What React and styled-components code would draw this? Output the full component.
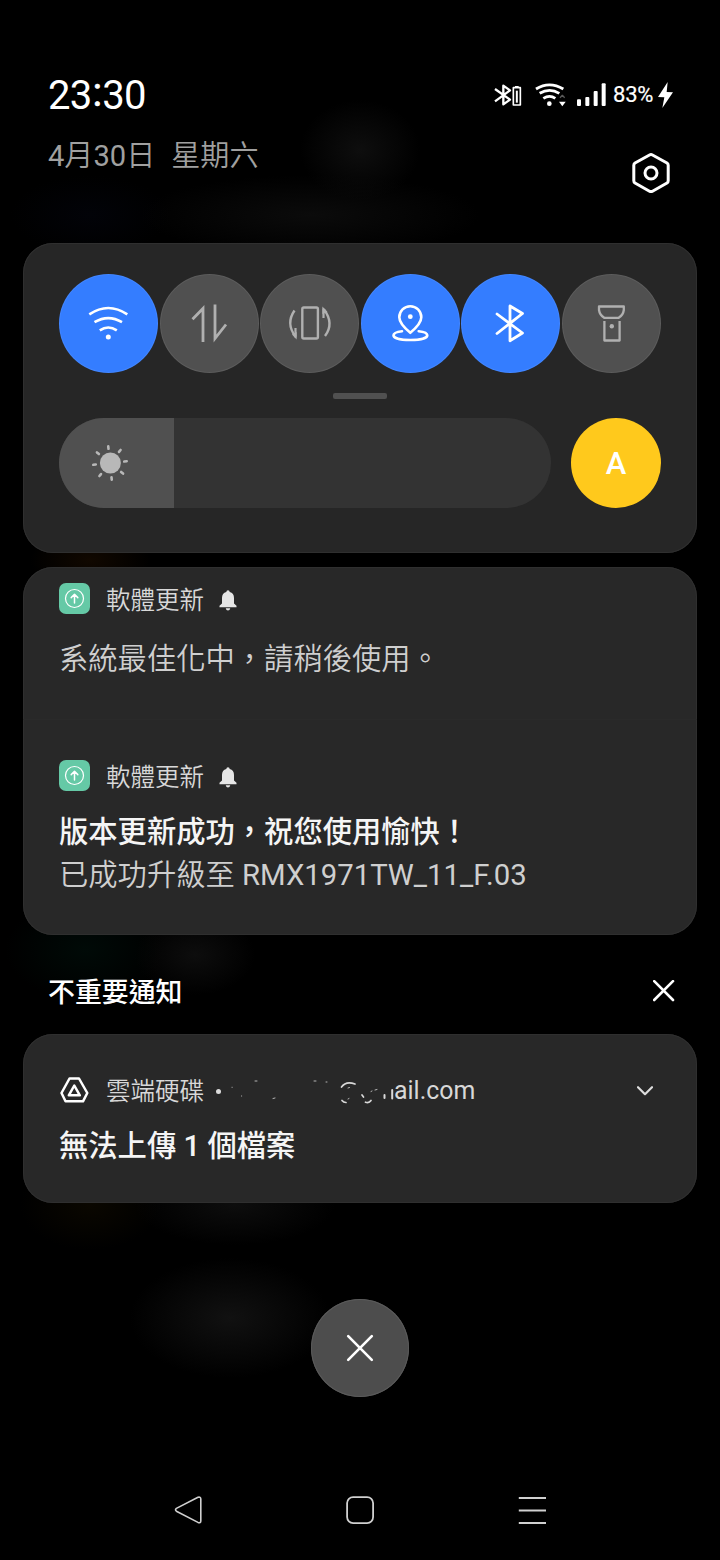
import styled, { createGlobalStyle } from 'styled-components';

const App = () => {
	return (
		<Screen lang="zh-Hant">
			<GlobalStyle />
			<Header>
				<DateTime>
					<Time>23<Colon>:</Colon>30</Time>
					<Today>
						<span>4月30日</span>
						<span>星期六</span>
					</Today>
				</DateTime>
				<StatusSide>
					<StatusBar>
						<BluetoothBatteryIcon />
						<StatusWifiIcon />
						<SignalIcon />
						<Percent>83%</Percent>
						<BoltIcon />
					</StatusBar>
					<SettingsIcon />
				</StatusSide>
			</Header>

			<QuickPanel>
				<Tiles>
					{tiles.map(({ name, on, Icon }) => (
						<Tile key={name} $on={on} aria-label={name}>
							<Icon />
						</Tile>
					))}
				</Tiles>
				<Handle />
				<BrightnessRow>
					<Slider>
						<SliderFill>
							<SunIcon />
						</SliderFill>
					</Slider>
					<AutoButton>A</AutoButton>
				</BrightnessRow>
			</QuickPanel>

			<Notifications>
				<Notice $height="152px" $top="14px">
					<NoticeHead>
						<UpdateIcon />
						<AppName $drop="5px">軟體更新</AppName>
						<BellIcon />
					</NoticeHead>
					<Text $top="23px">系統最佳化中，請稍後使用。</Text>
				</Notice>
				<Notice $height="216px" $top="38px" $line>
					<NoticeHead>
						<UpdateIcon />
						<AppName $drop="5px">軟體更新</AppName>
						<BellIcon />
					</NoticeHead>
					<Title $top="19px">版本更新成功，祝您使用愉快！</Title>
					<Text>已成功升級至 RMX1971TW_11_F.03</Text>
				</Notice>
			</Notifications>

			<SectionHead>
				<SectionTitle>不重要通知</SectionTitle>
				<Glyph width="22" height="22" viewBox="0 0 22 22" $weight={2.6}>
					<path d="M1.200 1.200 20 20M20 1.200 1.200 20" />
				</Glyph>
			</SectionHead>

			<DriveCard>
				<NoticeHead>
					<DriveIcon />
					<AppName $drop="3px">雲端硬碟</AppName>
					<Dot />
					<Account>
						<MaskedName />
						ail.com
					</Account>
					<Chevron width="16" height="10" viewBox="0 0 16 10" $weight={2.2}>
						<path d="M1 1.200 8 8.200 15 1.200" />
					</Chevron>
				</NoticeHead>
				<Title $top="18px">無法上傳 1 個檔案</Title>
			</DriveCard>

			<ClearButton aria-label="clear">
				<Glyph width="28" height="28" viewBox="0 0 28 28" $weight={2.6}>
					<path d="M2.200 2.200 25.800 25.800M25.800 2.200 2.200 25.800" />
				</Glyph>
			</ClearButton>

			<NavBar>
				<Glyph width="28" height="28" viewBox="0 0 28 28" $weight={1.6}>
					<path d="M2.400 12.400 24 1.300Q26.800 .6 26.800 3V25Q26.800 27.400 24 26.400L2.400 15.200Q.6 13.800 2.400 12.400Z" />
				</Glyph>
				<Glyph width="28" height="28" viewBox="0 0 28 28" $weight={1.8}>
					<rect x="1.100" y="1.100" width="26" height="26" rx="6" />
				</Glyph>
				<Glyph width="28" height="28" viewBox="0 0 28 28" $weight={2} $butt>
					<path d="M.8 2H28M.8 14.500H28M.8 27H28" />
				</Glyph>
			</NavBar>
		</Screen>
	);
};

export default App;

const GlobalStyle = createGlobalStyle`
	body{
		margin: 0;
		background: #000;
	}

	*{
		box-sizing: border-box;
	}
`;

const Screen = styled.div`
	width: 720px;
	height: 1560px;
	overflow: hidden;
	display: flex;
	flex-direction: column;
	color: #fff;
	font-family: Roboto, "Noto Sans CJK TC", sans-serif;
	background:
		radial-gradient(60px 50px at 360px 150px, #0e0e0e, transparent),
		radial-gradient(170px 40px at 310px 215px, #0b0b0b, transparent),
		radial-gradient(80px 40px at 90px 215px, #020308, transparent),
		radial-gradient(60px 30px at 90px 560px, #110800, transparent),
		radial-gradient(80px 50px at 85px 950px, #000a07, transparent),
		radial-gradient(60px 40px at 195px 955px, #0d0d0d, transparent),
		radial-gradient(70px 45px at 90px 1205px, #0a0700, transparent),
		radial-gradient(100px 40px at 235px 1205px, #0d0d0d, transparent),
		radial-gradient(100px 60px at 230px 1318px, #111, transparent),
		#000;
`;

const Header = styled.header`
	height: 243px;
	padding: 72px 47px 0 48px;
	display: flex;
	justify-content: space-between;
`;

const DateTime = styled.div`
	display: flex;
	flex-direction: column;
`;

const Time = styled.span`
	margin-top: 1px;
	font-size: 40px;
	line-height: 46px;
	letter-spacing: -.8px;
`;

const Colon = styled.span`
	position: relative;
	top: -3px;
	margin: 0 1px 0 1px;
	-webkit-text-stroke: .6px #fff;
`;

const Today = styled.div`
	display: flex;
	gap: 16px;
	margin-top: 16px;
	font-family: Roboto, "Noto Sans CJK TC DemiLight", "Noto Sans CJK TC", sans-serif;
	font-size: 29.1px;
	line-height: 42px;
	color: #a0a0a0;
`;

const StatusSide = styled.div`
	display: flex;
	flex-direction: column;
	align-items: flex-end;
`;

const StatusBar = styled.div`
	height: 46px;
	display: flex;
	align-items: center;
`;

const Percent = styled.span`
	margin: 0 4px 0 7px;
	width: 41px;
	font-size: 22px;
	letter-spacing: -.2px;
	line-height: 26px;
	-webkit-text-stroke: .2px #fff;
`;

const Glyph = styled.svg`
	display: block;
	flex: none;
	fill: none;
	stroke: currentColor;
	stroke-width: ${({ $weight }) => $weight || 2.6};
	stroke-linecap: ${({ $butt }) => ($butt ? 'butt' : 'round')};
	stroke-linejoin: round;

	.solid{
		fill: currentColor;
		stroke: none;
	}
`;

const HexGlyph = styled(Glyph)`
	margin: 34px 3px 0 0;
`;

const QuickPanel = styled.section`
	width: 674px;
	height: 310px;
	margin: 0 auto;
	padding: 31px 36px 0;
	display: flex;
	flex-direction: column;
	align-items: center;
	background: #262626;
	border-radius: 30px;
	box-shadow: inset 0 0 0 1px #2f2f2f;
`;

const Tiles = styled.div`
	width: 100%;
	display: flex;
	justify-content: space-between;
`;

const Tile = styled.div`
	width: 99px;
	height: 99px;
	border-radius: 50%;
	color: ${({ $on }) => ($on ? '#fff' : '#b0b0b0')};
	background: ${({ $on }) => ($on ? '#347dff' : '#505050')};
	box-shadow: inset 0 0 0 1px rgba(255, 255, 255, .07);
`;

const Handle = styled.div`
	width: 54px;
	height: 6px;
	margin-top: 20px;
	border-radius: 2px;
	background: #505050;
`;

const BrightnessRow = styled.div`
	width: 100%;
	margin-top: 19px;
	display: flex;
	justify-content: space-between;
`;

const Slider = styled.div`
	width: 492px;
	height: 90px;
	border-radius: 45px;
	overflow: hidden;
	background: #333;
`;

const SliderFill = styled.div`
	width: 115px;
	height: 100%;
	padding: 25px 0 0 31px;
	background: #505050;
	color: #b8b8b8;
`;

const AutoButton = styled.div`
	width: 90px;
	height: 90px;
	border-radius: 50%;
	display: flex;
	align-items: center;
	justify-content: center;
	background: #ffc91c;
	font-size: 31px;
	font-weight: 500;
`;

const Card = styled.section`
	width: 674px;
	margin: 0 auto;
	background: #282828;
	border-radius: 30px;
	box-shadow: inset 0 0 0 1px #2f2f2f;
`;

const Notifications = styled(Card)`
	height: 368px;
	margin-top: 14px;
`;

const Notice = styled.article`
	height: ${({ $height }) => $height};
	padding: ${({ $top }) => $top} 36px 0;
	border-top: ${({ $line }) => ($line ? '1px solid #2a2a2a' : 'none')};
`;

const NoticeHead = styled.div`
	height: 34px;
	display: flex;
	align-items: center;
`;

const AppName = styled.span`
	margin-left: 16px;
	padding-top: ${({ $drop }) => $drop};
	font-family: Roboto, "Noto Sans CJK TC DemiLight", "Noto Sans CJK TC", sans-serif;
	font-size: 24.5px;
	line-height: 34px;
	color: #d8d8d8;
`;

const Text = styled.p`
	margin: ${({ $top }) => $top || 0} 0 0;
	font-family: Roboto, "Noto Sans CJK TC DemiLight", "Noto Sans CJK TC", sans-serif;
	font-size: 29.3px;
	line-height: 43px;
	color: #cfcfcf;
	white-space: nowrap;
`;

const Title = styled(Text)`
	font-family: Roboto, "Noto Sans CJK TC", sans-serif;
	font-weight: 500;
	color: #f5f5f5;
`;

const SectionHead = styled.div`
	height: 99px;
	padding: 12px 45px 0 48px;
	display: flex;
	align-items: center;
	justify-content: space-between;
`;

const SectionTitle = styled.h2`
	margin: 5px 0 0;
	font-size: 26.9px;
	font-weight: 500;
	line-height: 40px;
`;

const DriveCard = styled(Card)`
	height: 169px;
	padding: 39px 36px 0;
`;

const Dot = styled.span`
	width: 5px;
	height: 5px;
	margin: 2px 0 0 12px;
	border-radius: 50%;
	background: #dcdcdc;
`;

const Account = styled.span`
	margin-left: 4px;
	padding-top: 2px;
	display: flex;
	align-items: center;
	font-size: 24.9px;
	line-height: 34px;
	color: #d8d8d8;
`;

const Chevron = styled(Glyph)`
	margin: 2px 8px 0 auto;
	color: #ddd;
`;

const ClearButton = styled.div`
	width: 98px;
	height: 98px;
	margin: 96px auto 0;
	display: flex;
	align-items: center;
	justify-content: center;
	border-radius: 50%;
	background: #4d4d4d;
	box-shadow: inset 0 0 0 1px #5a5a5a;
`;

const NavBar = styled.nav`
	margin-top: 99px;
	padding: 0 174px;
	display: flex;
	justify-content: space-between;
	color: #d0d0d0;
`;

const BluetoothBatteryIcon = () => (
	<Glyph width="28" height="24" viewBox="0 0 84 72" $weight={7} $butt>
		<path d="M3 18 48 50 28 64V8L48 22 3 55" />
		<path d="M58 14H79V66H58Z" strokeWidth="5" />
		<path d="M63 11H74" strokeWidth="4" />
		<path d="M68.500 23V59" strokeWidth="6" />
	</Glyph>
);

const StatusWifi = styled(Glyph)`
	margin-left: 13px;
`;

const StatusWifiIcon = () => (
	<StatusWifi width="31" height="24" viewBox="0 0 93 72" $weight={8.500} $butt>
		<path d="M3 18Q43-7 85 18" />
		<path d="M14 31Q44 13 73 31" />
		<path d="M25 46Q44 34 61 46" />
		<circle className="solid" cx="43" cy="62" r="7" />
		<path d="M75 44 82 37 89 44" strokeWidth="4" opacity=".35" />
		<path className="solid" d="M72 56H92L82 70Z" />
	</StatusWifi>
);

const Signal = styled(Glyph)`
	margin-left: 10px;
`;

const SignalIcon = () => (
	<Signal width="30" height="24" viewBox="0 0 90 72">
		<rect className="solid" x="3" y="49" width="12" height="20" rx="3" />
		<rect className="solid" x="28" y="42" width="12" height="27" rx="3" />
		<rect className="solid" x="53" y="24" width="12" height="45" rx="3" />
		<rect className="solid" x="77" y="1" width="12" height="68" rx="3" />
	</Signal>
);

const BoltIcon = () => (
	<Glyph width="15" height="26" viewBox="0 0 45 78">
		<path className="solid" d="M29 0 0 45 19 46 13 78 45 31 26 30Z" />
	</Glyph>
);

const SettingsIcon = () => (
	<HexGlyph width="38" height="42" viewBox="0 0 38 42" $weight={3}>
		<path d="M17.500 3Q19 2.200 20.500 3L35 11Q36.200 11.800 36.200 13.300V28.700Q36.200 30.200 35 31L20.500 39.200Q19 40 17.500 39.200L3 31Q1.800 30.200 1.800 28.700V13.300Q1.800 11.800 3 11Z" />
		<circle cx="19" cy="21" r="6" />
	</HexGlyph>
);

const WifiIcon = () => (
	<Glyph width="99" height="99" viewBox="0 0 99 99" $butt>
		<path d="M30.300 40.300Q49.300 27.700 68.300 40.300" />
		<path d="M35.500 48.200Q49.300 40 63 48.200" />
		<path d="M40.800 56.300Q49.300 50.600 57.800 56.300" />
		<circle className="solid" cx="49.300" cy="63" r="2.500" />
	</Glyph>
);

const DataIcon = () => (
	<Glyph width="99" height="99" viewBox="0 0 99 99" $weight={2.8} $butt>
		<path d="M32.500 45.300 43 34.500V68" strokeLinejoin="miter" />
		<path d="M55 30.500V64.500L66 50.500" strokeLinejoin="miter" />
	</Glyph>
);

const RotateIcon = () => (
	<Glyph width="99" height="99" viewBox="0 0 99 99" $weight={2.4} $butt>
		<rect x="42.300" y="33.500" width="15.600" height="31" rx="1.500" />
		<path d="M34.500 36.500Q25.500 49.500 35.500 62.500" />
		<path d="M35.500 54V63.500" strokeWidth="2.200" />
		<path className="solid" d="M36.600 58V65.500L32 60.500Z" />
		<path d="M65 62Q74.500 49.500 64 35.500" />
		<path d="M63.500 44V34.500" strokeWidth="2.200" />
		<path className="solid" d="M62.400 40V32.500L67.500 38Z" />
	</Glyph>
);

const LocationIcon = () => (
	<Glyph width="99" height="99" viewBox="0 0 99 99">
		<path d="M49.300 58.800Q38.300 49.500 38.300 43.200A11 11 0 0 1 60.300 43.200Q60.300 49.500 49.300 58.800Z" />
		<circle className="solid" cx="49.300" cy="42.700" r="2.400" />
		<path d="M41 57.200C35.500 57.800 32.500 59.500 32.500 61.300C32.500 64 39 66 49.300 66S66.300 64 66.300 61.300C66.300 59.500 63.300 57.800 57.700 57.200" />
	</Glyph>
);

const BluetoothIcon = () => (
	<Glyph width="99" height="99" viewBox="0 0 99 99" $weight={2.8}>
		<path d="M36 40 61.500 59 49 66.700V32L61.500 39.500 36 59.500" />
	</Glyph>
);

const TorchIcon = () => (
	<Glyph width="99" height="99" viewBox="0 0 99 99" $weight={2.300} $butt>
		<path d="M37 32.500H61.800V36Q61.200 41 56.700 43.800H42.200Q37.700 41 37 36Z" />
		<path d="M42.400 47V66.500H57.600V47" />
		<circle className="solid" cx="49.800" cy="52.300" r="2.200" />
	</Glyph>
);

const SunIcon = () => (
	<Glyph width="40" height="40" viewBox="-20 -20 40 40">
		<circle className="solid" cx=".4" r="10.500" />
		{[0, 45, 90, 135, 180, 225, 270, 315].map((deg) => (
			<path key={deg} d="M0-14.300V-16.800" transform={`rotate(${deg - 6})`} />
		))}
	</Glyph>
);

const UpdateIcon = () => (
	<Glyph width="31" height="31" viewBox="0 0 31 31" $weight={1.200}>
		<UpdateTile width="31" height="31" rx="7" />
		<circle cx="15.500" cy="15.500" r="9" />
		<path d="M15.500 20V11.500M12.200 14.600 15.500 11.300 18.800 14.600" strokeWidth="1.500" />
	</Glyph>
);

const UpdateTile = styled.rect`
	fill: #65c9a6;
	stroke: none;
`;

const Bell = styled(Glyph)`
	margin: 4px 0 0 15px;
	color: #e6e6e6;
`;

const BellIcon = () => (
	<Bell width="18" height="21" viewBox="0 0 18 21">
		<path className="solid" d="M9 .3Q10.600 .3 10.700 2Q15 3.200 15 8V13.500L17.500 15.800V17.300H.5V15.800L3 13.500V8Q3 3.200 7.300 2Q7.400 .3 9 .3ZM6.700 18.200H11.300Q10.800 20.500 9 20.500T6.700 18.200Z" />
	</Bell>
);

const DriveIcon = () => (
	<Glyph width="31" height="30" viewBox="0 0 31 30" $weight={2.500}>
		<path d="M10.500 3.500H20L28.300 18 24 26.300H6.500L2.500 18Z" />
		<path d="M15.300 10.500 20.800 20.300H9.800Z" />
	</Glyph>
);

// leftovers of the account name that is rubbed out before the domain
const MaskedName = () => (
	<Glyph width="169" height="34" viewBox="0 0 169 34" $weight={1.400}>
		<path d="M7 13.300h.2M16.500 22h.2M30 7h2M48 24.500 50 24M89 7h2M101 8h1" strokeWidth=".8" />
		<path d="M116.500 13Q121 6.500 130 10M117 26.500Q118.500 28.500 121 28.500" strokeWidth="1.700" />
		<path d="M123 14l1.500-.5M123 25l1-.5M146 17.500 147 17M150 16l2-.5" strokeWidth=".8" />
		<path d="M137 21 138.500 23M140.500 28.200Q144 29.500 146 26.500" strokeWidth="1.700" />
		<path d="M159.500 21V24M167.200 16V24.500" strokeWidth="2" />
	</Glyph>
);

const tiles = [
	{ name: 'wifi', on: true, Icon: WifiIcon },
	{ name: 'data', on: false, Icon: DataIcon },
	{ name: 'rotate', on: false, Icon: RotateIcon },
	{ name: 'location', on: true, Icon: LocationIcon },
	{ name: 'bluetooth', on: true, Icon: BluetoothIcon },
	{ name: 'torch', on: false, Icon: TorchIcon },
];
